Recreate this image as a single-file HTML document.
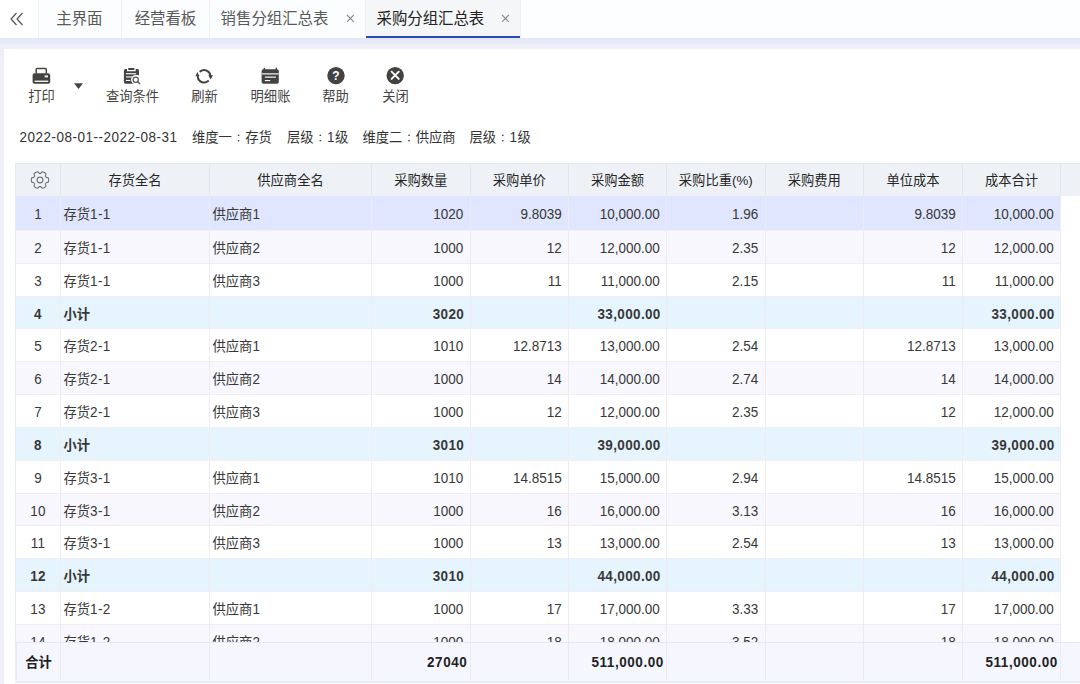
<!DOCTYPE html>
<html lang="zh-CN"><head><meta charset="utf-8"><title>采购分组汇总表</title>
<style>
*{box-sizing:border-box;margin:0;padding:0}
html,body{width:1080px;height:684px;overflow:hidden}
body{background:#eeeff9;font-family:"Liberation Sans","Noto Sans CJK SC",sans-serif;font-size:13.3px;color:#383838;position:relative}
.n{font-size:13.5px;letter-spacing:.2px;display:inline-block;line-height:1;transform:scaleY(1.07);transform-origin:0 84.5%}
.tabs{position:absolute;left:0;top:0;width:1080px;height:38px;background:#fcfeff;display:flex}
.tabs .t{height:38px;line-height:37px;font-size:15.4px;color:#595959;border-right:1px solid #f1eff3;background:#fbfdff;text-align:left;position:relative;white-space:nowrap}
.tabs .t0{width:39px;background:#fff;text-align:center}
.tabs .act{color:#222;background:#f4f6f8}
.tabs .act:after{content:"";position:absolute;left:0;right:0;bottom:0;height:2px;background:#2b4bb4}
.tabs .x{position:absolute;top:13.8px;display:block}
.shade{position:absolute;left:0;top:38px;width:1080px;height:11px;background:linear-gradient(#e3e6f5 0,#e6e9f6 5px,#eeeff9 7px,#eeeff9 11px)}
.panel{position:absolute;left:4px;top:49px;width:1076px;height:635px;background:#fff}
.ic{position:absolute;display:block}
.tb{position:absolute;text-align:center;font-size:13.3px;color:#444;white-space:nowrap;line-height:16px}
.info{position:absolute;top:129px;font-size:13.3px;line-height:18px;color:#333;white-space:nowrap}
.info .n{letter-spacing:.5px}
.tc{font-family:"Noto Sans CJK TC",sans-serif;display:inline-block;width:13.3px;text-align:center;font-size:10.5px;line-height:1}
.grid{position:absolute;left:15px;top:163px;width:1065px;height:521px;overflow:hidden}
.hr{position:relative;display:flex;height:33px;background:#eef2f7;border-top:1px solid #e5ebf4}
.hr .c{height:32px;line-height:34px;text-align:center;border-right:1px solid #e0e7ef;color:#262626;padding:0}
.body{position:absolute;left:0;top:33px;width:1046px}
.r{display:flex;height:32.83px;background:#fff}
.r .c{height:32.83px;line-height:36px;border-right:1px solid #eeebf1;border-top:1px solid #f0eef4;white-space:nowrap;overflow:hidden}
.r.alt{background:#f7f7fd}
.r.sel{background:#dfe6fd;height:34px}
.r.sel .c{height:34px;line-height:35px;border-top-color:transparent}
.r.sub{background:#e6f4fd;font-weight:bold}
.c0{width:46px;text-align:center;border-left:1px solid #e5ebf4}
.c1{width:149px;padding-left:2.5px}
.c2{width:162px;padding-left:2.5px}
.c3{width:98.5px}.c4{width:98.5px}.c5{width:98px}.c6{width:98.5px}.c7{width:98.5px}.c8{width:99px}.c9{width:98px}
.r .c3,.r .c4,.r .c5,.r .c6,.r .c7,.r .c8,.r .c9,.fr .c3,.fr .c5,.fr .c9{text-align:right;padding-right:6.3px}
.c3 .n,.c4 .n,.c5 .n,.c6 .n,.c7 .n,.c8 .n,.c9 .n{letter-spacing:0}
.cg{flex:1;border-right:none!important}
.gear{position:absolute;left:15.1px;top:6px}
.fr{position:absolute;left:0;top:479px;width:1065px;height:40.6px;display:flex;background:#f5f6fe;border-top:1px solid #e6eaf7;border-bottom:2px solid #e8ebf8;font-weight:bold;color:#222}
.fr .c{height:37px;line-height:39px;border-right:1px solid #ebeaf0;white-space:nowrap}
.fr .c3,.fr .c5,.fr .c9{padding-right:2.2px}
.r.sub .c3,.r.sub .c5,.r.sub .c9{padding-right:5.3px}
.r.sub .c .n{letter-spacing:.35px}
.fr .c .n{letter-spacing:.55px}
.fr .c0{text-align:left;padding-left:8.3px;overflow:visible;border-left:2px solid #e8ebf8}
.c1 .n,.c2 .n{letter-spacing:.35px}

</style></head>
<body>
<div class="tabs">
<div class="t t0"><svg width="14" height="14" viewBox="0 0 14 14" style="margin-top:12px;margin-right:3.5px"><path d="M6.5 1 L1 7 L6.5 13 M12.5 1 L7 7 L12.5 13" fill="none" stroke="#555" stroke-width="1.2"/></svg></div>
<div class="t" style="width:82.5px;padding-left:17.3px">主界面</div>
<div class="t" style="width:88.5px;padding-left:13.2px">经营看板</div>
<div class="t" style="width:155.5px;padding-left:10.6px">销售分组汇总表<svg class="x" style="left:136px" width="9" height="9" viewBox="0 0 9 9"><path d="M1 1 L7.8 7.8 M7.8 1 L1 7.8" stroke="#8c8c8c" stroke-width="1.1"/></svg></div>
<div class="t act" style="width:155.5px;padding-left:11px">采购分组汇总表<svg class="x" style="left:135.3px" width="9" height="9" viewBox="0 0 9 9"><path d="M1 1 L7.8 7.8 M7.8 1 L1 7.8" stroke="#8c8c8c" stroke-width="1.1"/></svg></div>
</div>
<div class="shade"></div>
<div class="panel"></div>
<div class="info" style="left:19.5px"><span class="n">2022-08-01--2022-08-31</span></div>
<div class="info" style="left:192px">维度一<span class="tc" lang="zh-TW">：</span>存货</div>
<div class="info" style="left:287px">层级<span class="tc" lang="zh-TW">：</span><span class="n">1</span>级</div>
<div class="info" style="left:362.5px">维度二<span class="tc" lang="zh-TW">：</span>供应商</div>
<div class="info" style="left:469.5px">层级<span class="tc" lang="zh-TW">：</span><span class="n">1</span>级</div>
<!-- toolbar icons -->
<svg class="ic" style="left:31px;top:66px" width="21" height="20" viewBox="0 0 21 20"><path d="M5.2 7.5 V3.6 Q5.2 2.6 6.2 2.6 H14.3 Q15.3 2.6 15.3 3.6 V7.5" fill="none" stroke="#434442" stroke-width="1.5"/><path d="M3.6 7.2 H17 Q19.2 7.2 19.2 9.4 V15.8 Q19.2 17.8 17.2 17.8 H3.6 Q1.6 17.8 1.6 15.8 V9.4 Q1.6 7.2 3.6 7.2 Z" fill="#434442"/><rect x="13.6" y="9.4" width="3.4" height="2" fill="#eee"/><rect x="3.6" y="14.6" width="13.6" height="1.3" fill="#fff"/></svg>
<svg class="ic" style="left:73px;top:82px" width="11" height="8" viewBox="0 0 11 8"><path d="M1 1.2 H10 L5.5 7 Z" fill="#434442"/></svg>
<svg class="ic" style="left:122px;top:66px" width="20" height="20" viewBox="0 0 20 20"><path d="M3.5 3 H5 V5.2 H13.7 V3 H15.4 Q17 3 17 4.6 V17.7 H3.5 Q1.9 17.7 1.9 16.1 V4.6 Q1.9 3 3.5 3 Z" fill="#434442"/><rect x="13.7" y="9.2" width="4" height="9" fill="#fff"/><circle cx="13.7" cy="13.7" r="4.7" fill="#fff"/><rect x="3.9" y="7.2" width="10.3" height="1.1" fill="#fff"/><rect x="3.9" y="10.4" width="6.5" height="1.1" fill="#fff"/><rect x="3.9" y="13.9" width="4.4" height="1.1" fill="#fff"/><rect x="6" y="1.9" width="6.6" height="2" rx="1" fill="#434442"/><circle cx="13.7" cy="13.7" r="2.6" fill="none" stroke="#555" stroke-width="1.2"/><path d="M15.7 15.7 L17.8 17.8" stroke="#555" stroke-width="1.3" stroke-linecap="round"/></svg>
<svg class="ic" style="left:194px;top:66px" width="20" height="20" viewBox="0 0 20 20"><path d="M6.3 5.4 A6.3 6.3 0 0 1 16.4 9.8" fill="none" stroke="#434442" stroke-width="2" stroke-linecap="round"/><path d="M14.1 15.1 A6.3 6.3 0 0 1 3.8 10.6" fill="none" stroke="#434442" stroke-width="2" stroke-linecap="round"/><path d="M14.3 9.3 H19 L16.7 13.5 Z" fill="#434442"/><path d="M1.4 10.2 H5.5 L3.4 6 Z" fill="#434442"/></svg>
<svg class="ic" style="left:260px;top:66px" width="20" height="20" viewBox="0 0 20 20"><path d="M3.4 3.2 H17 Q18.8 3.2 18.8 5 V16 Q18.8 17.8 17 17.8 H3.4 Q1.6 17.8 1.6 16 V5 Q1.6 3.2 3.4 3.2 Z" fill="#434442"/><rect x="3.6" y="1.8" width="1.4" height="2.4" fill="#434442"/><rect x="15.6" y="1.8" width="1.4" height="2.4" fill="#434442"/><rect x="1.6" y="7.1" width="17.2" height="1.5" fill="#d4d4d4"/><rect x="4.9" y="10.5" width="11" height="1.3" fill="#e8e8e8"/><rect x="4.9" y="14" width="5.3" height="1.1" fill="#fff"/></svg>
<svg class="ic" style="left:326px;top:65px" width="20" height="20" viewBox="0 0 20 20"><circle cx="10" cy="10.6" r="8.7" fill="#434442"/><text x="10" y="14.6" text-anchor="middle" font-family="Liberation Sans,sans-serif" font-weight="bold" font-size="12" fill="#fff">?</text></svg>
<svg class="ic" style="left:385px;top:65px" width="20" height="20" viewBox="0 0 20 20"><circle cx="10.2" cy="10.6" r="8.7" fill="#434442"/><path d="M6.6 6.7 L13.8 13.9 M13.8 6.7 L6.6 13.9" stroke="#fff" stroke-width="1.9" stroke-linecap="round"/></svg>
<div class="tb" style="left:11px;width:61px;top:89px">打印</div>
<div class="tb" style="left:102px;width:61px;top:89px">查询条件</div>
<div class="tb" style="left:174px;width:61px;top:89px">刷新</div>
<div class="tb" style="left:240px;width:61px;top:89px">明细账</div>
<div class="tb" style="left:305px;width:61px;top:89px">帮助</div>
<div class="tb" style="left:365px;width:61px;top:89px">关闭</div>
<div class="grid">
<div class="hr"><div class="c c0"><svg class="gear" width="20" height="20" viewBox="0 0 20 20"><path d="M18.65 10.00 L18.64 10.45 L18.60 10.90 L18.54 11.35 L18.46 11.80 L18.07 12.16 L17.29 12.37 L16.59 12.53 L16.08 12.70 L15.93 13.02 L15.76 13.32 L15.58 13.62 L15.38 13.91 L15.48 14.44 L15.70 15.13 L15.90 15.90 L15.79 16.43 L15.44 16.72 L15.08 17.00 L14.71 17.25 L14.33 17.49 L13.93 17.71 L13.52 17.90 L13.10 18.08 L12.67 18.23 L12.16 18.07 L11.59 17.50 L11.10 16.97 L10.70 16.61 L10.35 16.64 L10.00 16.65 L9.65 16.64 L9.30 16.61 L8.90 16.97 L8.41 17.50 L7.84 18.07 L7.33 18.23 L6.90 18.08 L6.48 17.90 L6.07 17.71 L5.68 17.49 L5.29 17.25 L4.92 17.00 L4.56 16.72 L4.21 16.43 L4.10 15.90 L4.30 15.13 L4.52 14.44 L4.62 13.91 L4.42 13.62 L4.24 13.32 L4.07 13.02 L3.92 12.70 L3.41 12.53 L2.71 12.37 L1.93 12.16 L1.54 11.80 L1.46 11.35 L1.40 10.90 L1.36 10.45 L1.35 10.00 L1.36 9.55 L1.40 9.10 L1.46 8.65 L1.54 8.20 L1.93 7.84 L2.71 7.63 L3.41 7.47 L3.92 7.30 L4.07 6.98 L4.24 6.68 L4.42 6.38 L4.62 6.09 L4.52 5.56 L4.30 4.87 L4.10 4.10 L4.21 3.57 L4.56 3.28 L4.92 3.00 L5.29 2.75 L5.67 2.51 L6.07 2.29 L6.48 2.10 L6.90 1.92 L7.33 1.77 L7.84 1.93 L8.41 2.50 L8.90 3.03 L9.30 3.39 L9.65 3.36 L10.00 3.35 L10.35 3.36 L10.70 3.39 L11.10 3.03 L11.59 2.50 L12.16 1.93 L12.67 1.77 L13.10 1.92 L13.52 2.10 L13.93 2.29 L14.33 2.51 L14.71 2.75 L15.08 3.00 L15.44 3.28 L15.79 3.57 L15.90 4.10 L15.70 4.87 L15.48 5.56 L15.38 6.09 L15.58 6.38 L15.76 6.68 L15.93 6.98 L16.08 7.30 L16.59 7.47 L17.29 7.63 L18.07 7.84 L18.46 8.20 L18.54 8.65 L18.60 9.10 L18.64 9.55 Z" fill="none" stroke="#707070" stroke-width="1.1" stroke-linejoin="round"/><circle cx="10" cy="10" r="2.9" fill="none" stroke="#707070" stroke-width="1.1"/></svg></div><div class="c c1">存货全名</div><div class="c c2">供应商全名</div><div class="c c3">采购数量</div><div class="c c4">采购单价</div><div class="c c5">采购金额</div><div class="c c6">采购比重(%)</div><div class="c c7">采购费用</div><div class="c c8">单位成本</div><div class="c c9">成本合计</div><div class="c cg"></div></div>
<div class="body">
<div class="r sel"><div class="c c0"><span class="n">1</span></div><div class="c c1">存货<span class="n">1-1</span></div><div class="c c2">供应商<span class="n">1</span></div><div class="c c3"><span class="n">1020</span></div><div class="c c4"><span class="n">9.8039</span></div><div class="c c5"><span class="n">10,000.00</span></div><div class="c c6"><span class="n">1.96</span></div><div class="c c7"></div><div class="c c8"><span class="n">9.8039</span></div><div class="c c9"><span class="n">10,000.00</span></div></div>
<div class="r alt"><div class="c c0"><span class="n">2</span></div><div class="c c1">存货<span class="n">1-1</span></div><div class="c c2">供应商<span class="n">2</span></div><div class="c c3"><span class="n">1000</span></div><div class="c c4"><span class="n">12</span></div><div class="c c5"><span class="n">12,000.00</span></div><div class="c c6"><span class="n">2.35</span></div><div class="c c7"></div><div class="c c8"><span class="n">12</span></div><div class="c c9"><span class="n">12,000.00</span></div></div>
<div class="r "><div class="c c0"><span class="n">3</span></div><div class="c c1">存货<span class="n">1-1</span></div><div class="c c2">供应商<span class="n">3</span></div><div class="c c3"><span class="n">1000</span></div><div class="c c4"><span class="n">11</span></div><div class="c c5"><span class="n">11,000.00</span></div><div class="c c6"><span class="n">2.15</span></div><div class="c c7"></div><div class="c c8"><span class="n">11</span></div><div class="c c9"><span class="n">11,000.00</span></div></div>
<div class="r sub"><div class="c c0"><span class="n">4</span></div><div class="c c1">小计</div><div class="c c2"></div><div class="c c3"><span class="n">3020</span></div><div class="c c4"></div><div class="c c5"><span class="n">33,000.00</span></div><div class="c c6"></div><div class="c c7"></div><div class="c c8"></div><div class="c c9"><span class="n">33,000.00</span></div></div>
<div class="r "><div class="c c0"><span class="n">5</span></div><div class="c c1">存货<span class="n">2-1</span></div><div class="c c2">供应商<span class="n">1</span></div><div class="c c3"><span class="n">1010</span></div><div class="c c4"><span class="n">12.8713</span></div><div class="c c5"><span class="n">13,000.00</span></div><div class="c c6"><span class="n">2.54</span></div><div class="c c7"></div><div class="c c8"><span class="n">12.8713</span></div><div class="c c9"><span class="n">13,000.00</span></div></div>
<div class="r alt"><div class="c c0"><span class="n">6</span></div><div class="c c1">存货<span class="n">2-1</span></div><div class="c c2">供应商<span class="n">2</span></div><div class="c c3"><span class="n">1000</span></div><div class="c c4"><span class="n">14</span></div><div class="c c5"><span class="n">14,000.00</span></div><div class="c c6"><span class="n">2.74</span></div><div class="c c7"></div><div class="c c8"><span class="n">14</span></div><div class="c c9"><span class="n">14,000.00</span></div></div>
<div class="r "><div class="c c0"><span class="n">7</span></div><div class="c c1">存货<span class="n">2-1</span></div><div class="c c2">供应商<span class="n">3</span></div><div class="c c3"><span class="n">1000</span></div><div class="c c4"><span class="n">12</span></div><div class="c c5"><span class="n">12,000.00</span></div><div class="c c6"><span class="n">2.35</span></div><div class="c c7"></div><div class="c c8"><span class="n">12</span></div><div class="c c9"><span class="n">12,000.00</span></div></div>
<div class="r sub"><div class="c c0"><span class="n">8</span></div><div class="c c1">小计</div><div class="c c2"></div><div class="c c3"><span class="n">3010</span></div><div class="c c4"></div><div class="c c5"><span class="n">39,000.00</span></div><div class="c c6"></div><div class="c c7"></div><div class="c c8"></div><div class="c c9"><span class="n">39,000.00</span></div></div>
<div class="r "><div class="c c0"><span class="n">9</span></div><div class="c c1">存货<span class="n">3-1</span></div><div class="c c2">供应商<span class="n">1</span></div><div class="c c3"><span class="n">1010</span></div><div class="c c4"><span class="n">14.8515</span></div><div class="c c5"><span class="n">15,000.00</span></div><div class="c c6"><span class="n">2.94</span></div><div class="c c7"></div><div class="c c8"><span class="n">14.8515</span></div><div class="c c9"><span class="n">15,000.00</span></div></div>
<div class="r alt"><div class="c c0"><span class="n">10</span></div><div class="c c1">存货<span class="n">3-1</span></div><div class="c c2">供应商<span class="n">2</span></div><div class="c c3"><span class="n">1000</span></div><div class="c c4"><span class="n">16</span></div><div class="c c5"><span class="n">16,000.00</span></div><div class="c c6"><span class="n">3.13</span></div><div class="c c7"></div><div class="c c8"><span class="n">16</span></div><div class="c c9"><span class="n">16,000.00</span></div></div>
<div class="r "><div class="c c0"><span class="n">11</span></div><div class="c c1">存货<span class="n">3-1</span></div><div class="c c2">供应商<span class="n">3</span></div><div class="c c3"><span class="n">1000</span></div><div class="c c4"><span class="n">13</span></div><div class="c c5"><span class="n">13,000.00</span></div><div class="c c6"><span class="n">2.54</span></div><div class="c c7"></div><div class="c c8"><span class="n">13</span></div><div class="c c9"><span class="n">13,000.00</span></div></div>
<div class="r sub"><div class="c c0"><span class="n">12</span></div><div class="c c1">小计</div><div class="c c2"></div><div class="c c3"><span class="n">3010</span></div><div class="c c4"></div><div class="c c5"><span class="n">44,000.00</span></div><div class="c c6"></div><div class="c c7"></div><div class="c c8"></div><div class="c c9"><span class="n">44,000.00</span></div></div>
<div class="r "><div class="c c0"><span class="n">13</span></div><div class="c c1">存货<span class="n">1-2</span></div><div class="c c2">供应商<span class="n">1</span></div><div class="c c3"><span class="n">1000</span></div><div class="c c4"><span class="n">17</span></div><div class="c c5"><span class="n">17,000.00</span></div><div class="c c6"><span class="n">3.33</span></div><div class="c c7"></div><div class="c c8"><span class="n">17</span></div><div class="c c9"><span class="n">17,000.00</span></div></div>
<div class="r alt"><div class="c c0"><span class="n">14</span></div><div class="c c1">存货<span class="n">1-2</span></div><div class="c c2">供应商<span class="n">2</span></div><div class="c c3"><span class="n">1000</span></div><div class="c c4"><span class="n">18</span></div><div class="c c5"><span class="n">18,000.00</span></div><div class="c c6"><span class="n">3.52</span></div><div class="c c7"></div><div class="c c8"><span class="n">18</span></div><div class="c c9"><span class="n">18,000.00</span></div></div>
</div>
<div class="fr"><div class="c c0">合计</div><div class="c c1"></div><div class="c c2"></div><div class="c c3"><span class="n">27040</span></div><div class="c c4"></div><div class="c c5"><span class="n">511,000.00</span></div><div class="c c6"></div><div class="c c7"></div><div class="c c8"></div><div class="c c9"><span class="n">511,000.00</span></div><div class="c cg"></div></div>
</div>
</div>
</body></html>
